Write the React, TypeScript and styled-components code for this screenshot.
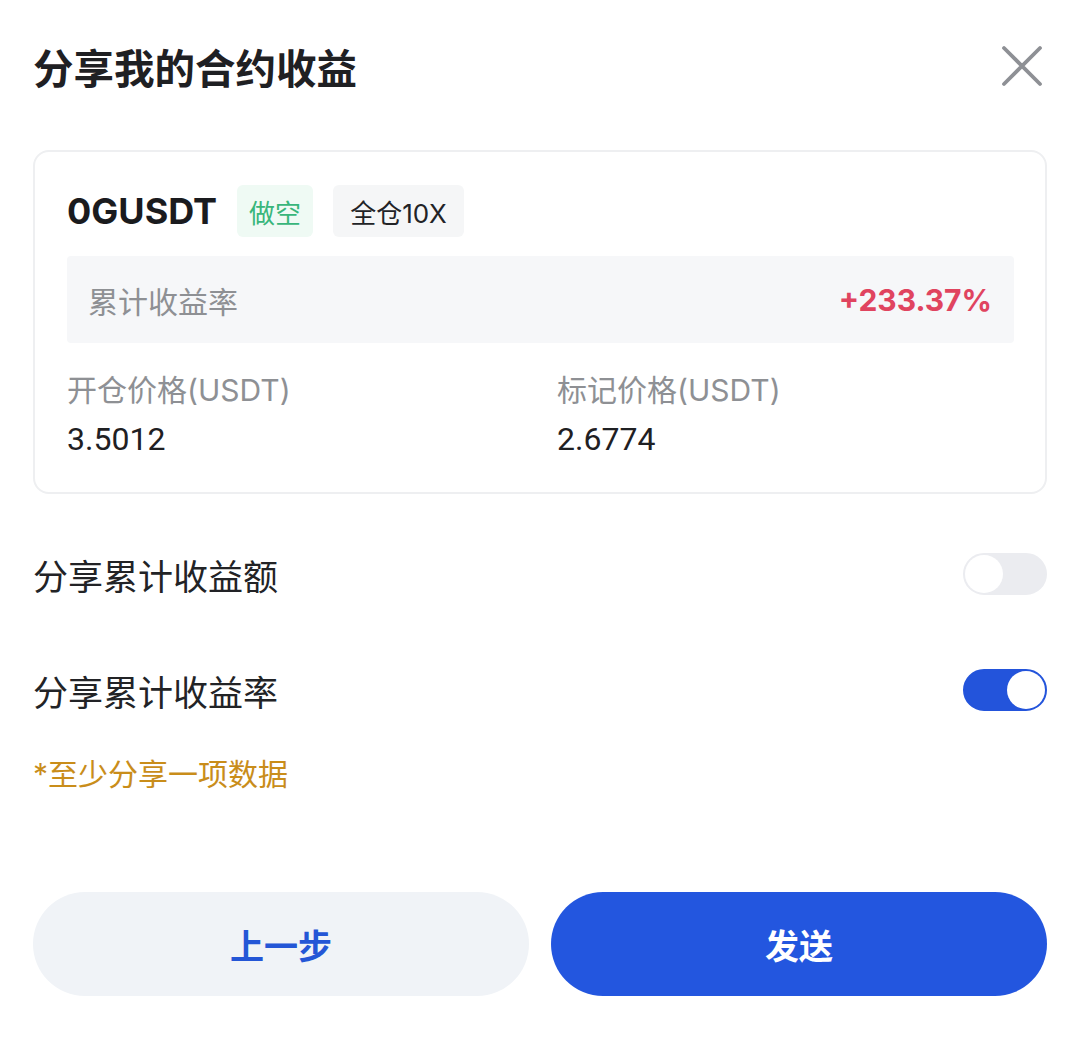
import React, { useState } from "react";
import styled, { createGlobalStyle } from "styled-components";

const Global = createGlobalStyle`
  html, body { margin: 0; padding: 0; background: #ffffff; }
  body { font-family: Inter, "Noto Sans CJK SC", "Noto Sans", sans-serif; color: #1f2023; }
  * { box-sizing: border-box; }
`;

const Page = styled.div`
  width: 1080px;
  min-height: 1059px;
  padding: 42px 33px 0 33px;
  display: flex;
  flex-direction: column;
`;

const Header = styled.div`
  display: flex;
  align-items: center;
  justify-content: space-between;
  height: 56px;
`;

const Title = styled.h1`
  margin: 0;
  font-size: 40.5px;
  line-height: 56px;
  font-weight: 700;
  color: #1f2023;
`;

const CloseBtn = styled.button`
  border: 0;
  background: none;
  padding: 0;
  width: 44px;
  height: 44px;
  display: flex;
  align-items: center;
  justify-content: center;
  margin-right: 3px;
  margin-top: -8px;
  cursor: pointer;
`;

const Card = styled.div`
  margin-top: 52px;
  border: 2px solid #eeeff1;
  border-radius: 16px;
  padding: 33px 31px 33px 32px;
  display: flex;
  flex-direction: column;
`;

const SymbolRow = styled.div`
  display: flex;
  align-items: center;
  gap: 20px;
  height: 52px;
`;

const Symbol = styled.div`
  font-size: 36px;
  font-weight: 700;
  line-height: 1;
  color: #1a1b1e;
`;

const Tag = styled.span<{ $tone: "green" | "gray" }>`
  height: 52px;
  display: inline-flex;
  align-items: center;
  padding: ${(p) => (p.$tone === "green" ? "0 12px" : "0 17px")};
  border-radius: 6px;
  font-size: 26px;
  background: ${(p) => (p.$tone === "green" ? "#effaf4" : "#f5f6f7")};
  color: ${(p) => (p.$tone === "green" ? "#38b67b" : "#222326")};
`;

const RateBox = styled.div`
  margin-top: 19px;
  height: 87px;
  background: #f6f7f9;
  border-radius: 4px;
  display: flex;
  align-items: center;
  justify-content: space-between;
  padding: 0 22px 0 21px;
`;

const RateLabel = styled.span`
  font-size: 30px;
  color: #8e9094;
`;

const RateValue = styled.span`
  font-size: 30px;
  font-weight: 700;
  color: #e0445f;
`;

const PriceGrid = styled.div`
  margin-top: 27px;
  display: grid;
  grid-template-columns: 490px 1fr;
`;

const PriceCell = styled.div`
  display: flex;
  flex-direction: column;
  gap: 9px;
`;

const PriceLabel = styled.span`
  font-size: 30px;
  line-height: 40px;
  color: #8e9094;
`;

const PriceValue = styled.span`
  font-family: Roboto, "Noto Sans", sans-serif;
  font-size: 32px;
  line-height: 40px;
  color: #1f2023;
`;

const OptionsBlock = styled.div`
  margin-top: 22px;
  display: flex;
  flex-direction: column;
`;

const OptionRow = styled.div`
  height: 116px;
  display: flex;
  align-items: center;
  justify-content: space-between;
`;

const OptionLabel = styled.span`
  font-size: 35px;
  color: #222326;
`;

const Switch = styled.button<{ $on: boolean }>`
  width: 84px;
  height: 42px;
  border-radius: 21px;
  border: 2px solid ${(p) => (p.$on ? "#2354db" : "#ebecf0")};
  background: ${(p) => (p.$on ? "#2354db" : "#ebecf0")};
  padding: 0;
  display: flex;
  justify-content: ${(p) => (p.$on ? "flex-end" : "flex-start")};
  align-items: center;
  cursor: pointer;
`;

const Knob = styled.span`
  width: 38px;
  height: 38px;
  border-radius: 50%;
  background: #ffffff;
`;

const Note = styled.div`
  margin-top: 6px;
  font-size: 30px;
  line-height: 40px;
  color: #c98d1a;
`;

const Actions = styled.div`
  margin-top: 98px;
  display: grid;
  grid-template-columns: 1fr 1fr;
  gap: 22px;
`;

const ActionBtn = styled.button<{ $primary?: boolean }>`
  height: 104px;
  border: 0;
  border-radius: 52px;
  font-family: Inter, "Noto Sans CJK SC", sans-serif;
  font-size: 34px;
  font-weight: 700;
  background: ${(p) => (p.$primary ? "#2356df" : "#f0f3f7")};
  color: ${(p) => (p.$primary ? "#ffffff" : "#2456d6")};
  cursor: pointer;
`;

export default function App() {
  const [amount, setAmount] = useState(false);
  const [rate, setRate] = useState(true);
  return (
    <>
      <Global />
      <Page>
        <Header>
          <Title>分享我的合约收益</Title>
          <CloseBtn aria-label="close">
            <svg width="42" height="42" viewBox="0 0 42 42">
              <path d="M3 3 L39 39 M39 3 L3 39" stroke="#8e9095" strokeWidth="3.8" strokeLinecap="round" fill="none" />
            </svg>
          </CloseBtn>
        </Header>

        <Card>
          <SymbolRow>
            <Symbol>0GUSDT</Symbol>
            <Tag $tone="green">做空</Tag>
            <Tag $tone="gray">全仓10X</Tag>
          </SymbolRow>
          <RateBox>
            <RateLabel>累计收益率</RateLabel>
            <RateValue>+233.37%</RateValue>
          </RateBox>
          <PriceGrid>
            <PriceCell>
              <PriceLabel>开仓价格(USDT)</PriceLabel>
              <PriceValue>3.5012</PriceValue>
            </PriceCell>
            <PriceCell>
              <PriceLabel>标记价格(USDT)</PriceLabel>
              <PriceValue>2.6774</PriceValue>
            </PriceCell>
          </PriceGrid>
        </Card>

        <OptionsBlock>
          <OptionRow>
            <OptionLabel>分享累计收益额</OptionLabel>
            <Switch $on={amount} onClick={() => setAmount(!amount)}>
              <Knob />
            </Switch>
          </OptionRow>
          <OptionRow>
            <OptionLabel>分享累计收益率</OptionLabel>
            <Switch $on={rate} onClick={() => setRate(!rate)}>
              <Knob />
            </Switch>
          </OptionRow>
        </OptionsBlock>
        <Note>*至少分享一项数据</Note>

        <Actions>
          <ActionBtn>上一步</ActionBtn>
          <ActionBtn $primary>发送</ActionBtn>
        </Actions>
      </Page>
    </>
  );
}
